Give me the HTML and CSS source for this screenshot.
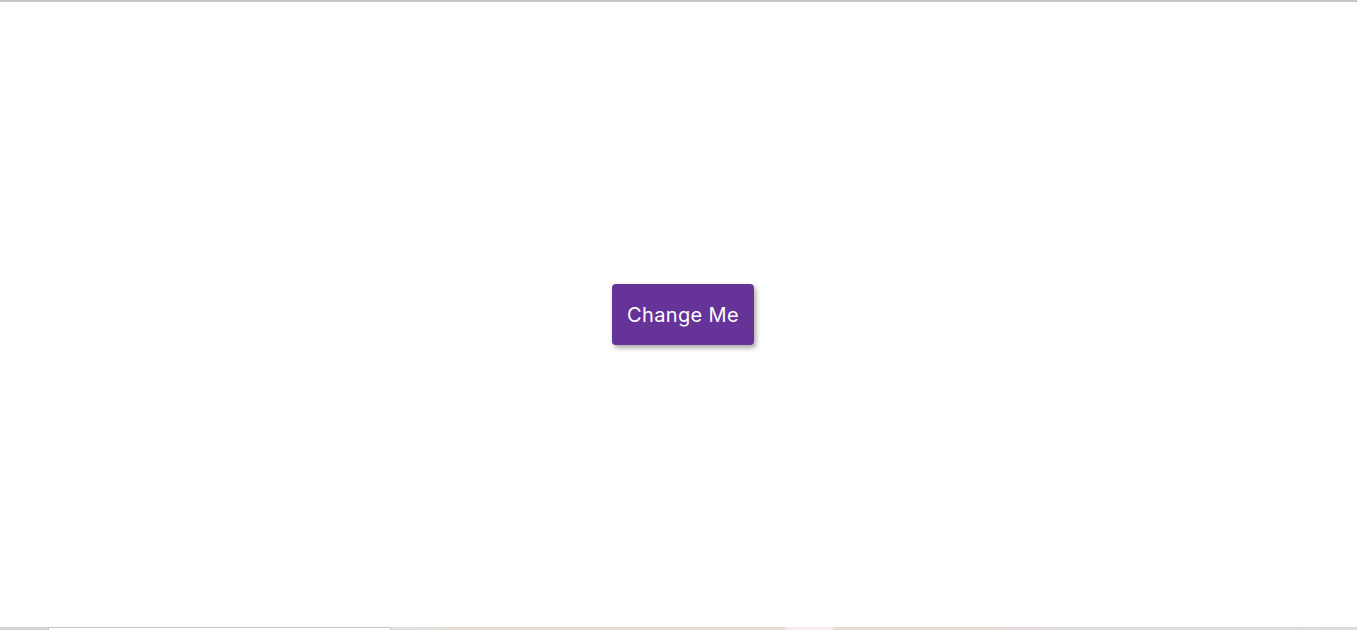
FILE: index.html
```html
<!DOCTYPE html>
<html lang="en">
<head>
<meta charset="utf-8">
<title>Change Me</title>
<link rel="stylesheet" href="styles.css">
</head>
<body>
<div class="topline"></div>
<main class="stage">
  <button class="btn" type="button">Change Me</button>
</main>
<div class="bottom-strip">
  <div class="seg seg-grey"></div>
  <div class="seg seg-white"></div>
  <div class="seg seg-blue"></div>
  <div class="seg seg-beige"></div>
  <div class="seg seg-pink"></div>
  <div class="seg seg-fade"></div>
</div>
</body>
</html>
```
FILE: styles.css
```css
html, body {
  margin: 0;
  padding: 0;
  background: #ffffff;
}
body {
  height: 630px;
  overflow: hidden;
  display: flex;
  flex-direction: column;
  font-family: "Inter", "Open Sans", sans-serif;
}
.topline {
  height: 2px;
  background: #c6c6c6;
  flex: none;
}
.stage {
  flex: 1;
  display: flex;
  align-items: center;
  justify-content: center;
  padding-left: 9px;
}
.btn {
  width: 142px;
  height: 61px;
  padding: 0;
  background: #663399;
  color: #ffffff;
  border: none;
  border-radius: 4px;
  font-family: "Inter", "Open Sans", sans-serif;
  font-size: 20px;
  font-weight: 400;
  letter-spacing: 0.35px;
  box-shadow: 2px 3px 5px rgba(0, 0, 0, 0.35);
  cursor: pointer;
}
.bottom-strip {
  height: 3px;
  flex: none;
  display: flex;
}
.seg { height: 100%; }
.seg-grey { width: 48px; background: #d6d6d6; }
.seg-white { width: 343px; background: #ffffff; border: 1px solid #c8c8c8; border-bottom: none; box-sizing: border-box; }
.seg-blue { width: 69px; background: linear-gradient(90deg, #e2e2e4, #e6ddd6); }
.seg-beige { width: 325px; background: #e8dcd4; }
.seg-pink { width: 48px; background: #f5ecea; }
.seg-fade { flex: 1; background: linear-gradient(90deg, #e8dcd4, #e2dedc 60%, #dcdcdc); }
```
